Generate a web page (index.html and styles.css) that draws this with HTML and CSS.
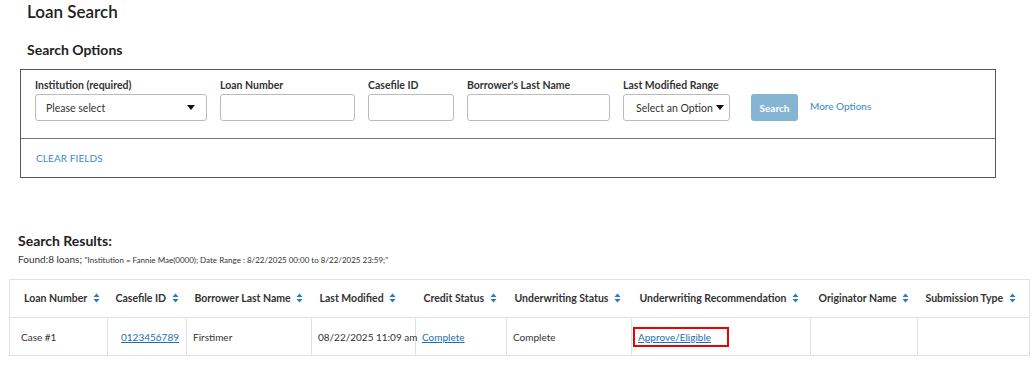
FILE: index.html
```html
<!DOCTYPE html>
<html lang="en">
<head>
    <meta charset="UTF-8">
    <meta name="viewport" content="width=device-width, initial-scale=1.0">
    <title>Loan Search</title>
    <link rel="stylesheet" href="styles.css">
</head>
<body>
    <h1 class="page-title">Loan Search</h1>

    <h2 class="section-title">Search Options</h2>

    <div class="search-box">
        <div class="search-fields">
            <div class="field field-institution">
                <label>Institution (required)</label>
                <div class="select">
                    <span>Please select</span>
                    <span class="caret"></span>
                </div>
            </div>
            <div class="field field-loan">
                <label>Loan Number</label>
                <div class="input"></div>
            </div>
            <div class="field field-casefile">
                <label>Casefile ID</label>
                <div class="input"></div>
            </div>
            <div class="field field-borrower">
                <label>Borrower's Last Name</label>
                <div class="input"></div>
            </div>
            <div class="field field-range">
                <label>Last Modified Range</label>
                <div class="select select-inline">
                    <span>Select an Option</span>
                    <span class="caret"></span>
                </div>
            </div>
            <button type="button" class="search-btn">Search</button>
            <a class="more-options">More Options</a>
        </div>
        <div class="search-footer">
            <a class="clear-fields">CLEAR FIELDS</a>
        </div>
    </div>

    <h2 class="results-title">Search Results:</h2>
    <div class="found">Found:8 loans; <small>"Institution = Fannie Mae(0000); Date Range : 8/22/2025 00:00 to 8/22/2025 23:59;"</small></div>

    <table class="results">
        <colgroup>
            <col style="width: 98px">
            <col style="width: 79px">
            <col style="width: 125px">
            <col style="width: 104px">
            <col style="width: 91px">
            <col style="width: 125px">
            <col style="width: 179px">
            <col style="width: 107px">
            <col style="width: 112px">
        </colgroup>
        <thead>
            <tr>
                <th>Loan Number <span class="sort"><svg width="7" height="10" viewBox="0 0 7 10"><path d="M0.5 4L3.5 0.5L6.5 4Z M0.5 6L3.5 9.5L6.5 6Z" fill="#2a7ab8"/></svg></span></th>
                <th>Casefile ID <span class="sort"><svg width="7" height="10" viewBox="0 0 7 10"><path d="M0.5 4L3.5 0.5L6.5 4Z M0.5 6L3.5 9.5L6.5 6Z" fill="#2a7ab8"/></svg></span></th>
                <th>Borrower Last Name <span class="sort"><svg width="7" height="10" viewBox="0 0 7 10"><path d="M0.5 4L3.5 0.5L6.5 4Z M0.5 6L3.5 9.5L6.5 6Z" fill="#2a7ab8"/></svg></span></th>
                <th>Last Modified <span class="sort"><svg width="7" height="10" viewBox="0 0 7 10"><path d="M0.5 4L3.5 0.5L6.5 4Z M0.5 6L3.5 9.5L6.5 6Z" fill="#2a7ab8"/></svg></span></th>
                <th>Credit Status <span class="sort"><svg width="7" height="10" viewBox="0 0 7 10"><path d="M0.5 4L3.5 0.5L6.5 4Z M0.5 6L3.5 9.5L6.5 6Z" fill="#2a7ab8"/></svg></span></th>
                <th>Underwriting Status <span class="sort"><svg width="7" height="10" viewBox="0 0 7 10"><path d="M0.5 4L3.5 0.5L6.5 4Z M0.5 6L3.5 9.5L6.5 6Z" fill="#2a7ab8"/></svg></span></th>
                <th>Underwriting Recommendation <span class="sort"><svg width="7" height="10" viewBox="0 0 7 10"><path d="M0.5 4L3.5 0.5L6.5 4Z M0.5 6L3.5 9.5L6.5 6Z" fill="#2a7ab8"/></svg></span></th>
                <th>Originator Name <span class="sort"><svg width="7" height="10" viewBox="0 0 7 10"><path d="M0.5 4L3.5 0.5L6.5 4Z M0.5 6L3.5 9.5L6.5 6Z" fill="#2a7ab8"/></svg></span></th>
                <th>Submission Type <span class="sort"><svg width="7" height="10" viewBox="0 0 7 10"><path d="M0.5 4L3.5 0.5L6.5 4Z M0.5 6L3.5 9.5L6.5 6Z" fill="#2a7ab8"/></svg></span></th>
            </tr>
        </thead>
        <tbody>
            <tr>
                <td>Case #1</td>
                <td class="center"><a href="#">0123456789</a></td>
                <td>Firstimer</td>
                <td>08/22/2025 11:09 am</td>
                <td><a href="#">Complete</a></td>
                <td>Complete</td>
                <td><span class="highlight"><a href="#">Approve/Eligible</a></span></td>
                <td></td>
                <td></td>
            </tr>
        </tbody>
    </table>
</body>
</html>
```

FILE: styles.css
```css
body {
    font-family: Lato, "Open Sans", sans-serif;
    color: #333;
    margin: 0;
    background-color: white;
}

.page-title {
    font-size: 17px;
    font-weight: 600;
    line-height: 20px;
    margin: 2px 0 0 27px;
    color: #222;
}

.section-title {
    font-size: 14px;
    font-weight: bold;
    line-height: 18px;
    margin: 19px 0 0 27px;
    color: #222;
}

.search-box {
    margin: 10px 0 0 20px;
    width: 974px;
    border: 1px solid #555;
}

.search-fields {
    display: flex;
    align-items: flex-end;
    padding: 9px 14px 17px 14px;
    border-bottom: 1px solid #777;
}

.field {
    display: flex;
    flex-direction: column;
    margin-right: 13px;
}

.field label {
    font-size: 10.5px;
    font-weight: bold;
    line-height: 13px;
    margin-bottom: 2px;
    color: #333;
}

.input,
.select {
    height: 25px;
    border: 1px solid #bbb;
    border-radius: 3px;
    box-sizing: content-box;
}

.field-institution .select { width: 170px; }
.field-loan .input { width: 133px; }
.field-casefile .input { width: 84px; }
.field-borrower .input { width: 141px; }
.field-range .select { width: 105px; }

.select {
    display: flex;
    align-items: center;
    justify-content: space-between;
    padding: 0;
    font-size: 10.5px;
    color: #333;
}

.select span:first-child {
    padding-left: 10px;
}

.select .caret {
    width: 0;
    height: 0;
    border-left: 4px solid transparent;
    border-right: 4px solid transparent;
    border-top: 5px solid #111;
    margin-right: 11px;
}

.select-inline {
    justify-content: flex-start;
}

.select-inline span:first-child {
    padding-left: 12px;
}

.select-inline .caret {
    margin-left: 3px;
    margin-right: 0;
}

.search-btn {
    margin-left: 8px;
    width: 47px;
    height: 27px;
    background-color: #86b4d3;
    color: white;
    border: none;
    border-radius: 3px;
    font-family: inherit;
    font-size: 10px;
    font-weight: bold;
    padding: 0;
}

.more-options {
    margin-left: 12px;
    margin-bottom: 9px;
    font-size: 10px;
    color: #3a86c4;
}

.search-footer {
    height: 38px;
    display: flex;
    align-items: center;
    padding-left: 15px;
}

.clear-fields {
    font-size: 10px;
    color: #3a8bc8;
    letter-spacing: 0.1px;
}

.results-title {
    font-size: 14px;
    font-weight: bold;
    line-height: 18px;
    margin: 54px 0 0 18px;
    color: #222;
}

.found {
    font-size: 10px;
    line-height: 12px;
    margin: 3px 0 0 18px;
    color: #333;
}

.found small {
    font-size: 8px;
}

.results {
    margin: 13px 0 0 9px;
    border-collapse: collapse;
    table-layout: fixed;
    width: 1021px;
    border: 1px solid #e2e2e2;
    font-size: 10.5px;
}

.results th {
    height: 37px;
    text-align: left;
    font-weight: bold;
    padding: 0 0 0 14px;
    border-bottom: 1px solid #e2e2e2;
    white-space: nowrap;
    color: #333;
}

.results th + th {
    padding-left: 8px;
}

.sort {
    margin-left: 3px;
    vertical-align: -1px;
}

.results td {
    height: 37px;
    padding: 0 0 0 11px;
    border-left: 1px solid #e2e2e2;
    border-bottom: 1px solid #e2e2e2;
    white-space: nowrap;
    font-size: 10px;
}

.results td + td {
    padding-left: 6px;
}

.results td.center {
    padding-left: 13px;
}

.results a {
    color: #1a6fb5;
    text-decoration: underline;
}

.highlight {
    display: inline-block;
    border: 2px solid #e00;
    padding: 2px 16px 2px 3px;
    margin-left: -5px;
}
```
